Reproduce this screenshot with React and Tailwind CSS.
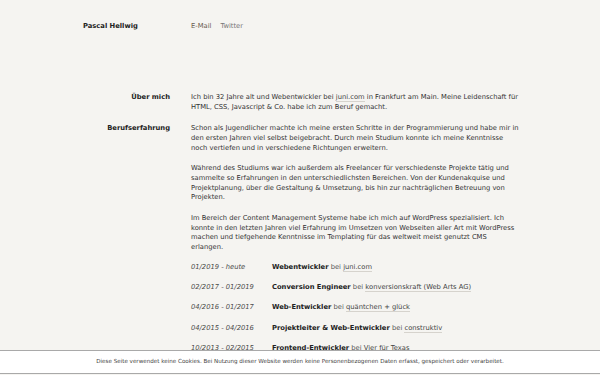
import React from "react";

const L = ({ children }) => (
  <span className="border-b border-[#d6d3cd] text-[#444]">{children}</span>
);

const jobs = [
  ["01/2019 - heute", "Webentwickler", "juni.com", true],
  ["02/2017 - 01/2019", "Conversion Engineer", "konversionskraft (Web Arts AG)", true],
  ["04/2016 - 01/2017", "Web-Entwickler", "quäntchen + glück", true],
  ["04/2015 - 04/2016", "Projektleiter & Web-Entwickler", "construktiv", true],
  ["10/2013 - 02/2015", "Frontend-Entwickler", "Vier für Texas", false],
];

export default function App() {
  return (
    <div
      className="relative h-[375px] w-[600px] overflow-hidden bg-[#f5f4f1] text-[#333] text-[6.75px] leading-[9.7px]"
      style={{ fontFamily: '"DejaVu Sans", sans-serif' }}
    >
      <div className="grid grid-cols-[87px_328px] gap-x-[21px] pl-[83px] pt-[21.5px]">
        <div className="font-bold text-[#222]">Pascal Hellwig</div>
        <div className="flex gap-[9px]">
          <span className="text-[#6b5e52]">E-Mail</span>
          <span className="text-[#777]">Twitter</span>
        </div>

        <div className="mt-[62px] text-right font-bold text-[#222]">Über mich</div>
        <div className="mt-[62px]">
          Ich bin 32 Jahre alt und Webentwickler bei <L>juni.com</L> in Frankfurt am Main. Meine Leidenschaft für HTML, CSS, Javascript &amp; Co. habe ich zum Beruf gemacht.
        </div>

        <div className="mt-[11.5px] text-right font-bold text-[#222]">Berufserfahrung</div>
        <div className="mt-[11.5px] flex flex-col gap-[11px]">
          <p>
            Schon als Jugendlicher machte ich meine ersten Schritte in der Programmierung und habe mir in den ersten Jahren viel selbst beigebracht. Durch mein Studium konnte ich meine Kenntnisse noch vertiefen und in verschiedene Richtungen erweitern.
          </p>
          <p>
            Während des Studiums war ich außerdem als Freelancer für verschiedenste Projekte tätig und sammelte so Erfahrungen in den unterschiedlichsten Bereichen. Von der Kundenakquise und Projektplanung, über die Gestaltung &amp; Umsetzung, bis hin zur nachträglichen Betreuung von Projekten.
          </p>
          <p>
            Im Bereich der Content Management Systeme habe ich mich auf WordPress spezialisiert. Ich konnte in den letzten Jahren viel Erfahrung im Umsetzen von Webseiten aller Art mit WordPress machen und tiefgehende Kenntnisse im Templating für das weltweit meist genutzt CMS erlangen.
          </p>
          <div className="-mt-[1px] flex flex-col gap-[10.6px]">
            {jobs.map(([d, t, c, u]) => (
              <div key={d} className="flex">
                <span className="w-[81px] shrink-0 italic text-[#4a4a4a]">{d}</span>
                <span>
                  <b className="text-[#222]">{t}</b>{" "}
                  <span className="text-[#555]">bei</span>{" "}
                  {u ? <L>{c}</L> : <span className="text-[#444]">{c}</span>}
                </span>
              </div>
            ))}
          </div>
        </div>
      </div>

      <div
        className="absolute left-0 right-0 top-[350px] flex h-[24px] items-center justify-center border-y border-[#a9a9a9] bg-white text-[5.6px] text-[#444]"
      >
        Diese Seite verwendet keine Cookies. Bei Nutzung dieser Website werden keine Personenbezogenen Daten erfasst, gespeichert oder verarbeitet.
      </div>
    </div>
  );
}
